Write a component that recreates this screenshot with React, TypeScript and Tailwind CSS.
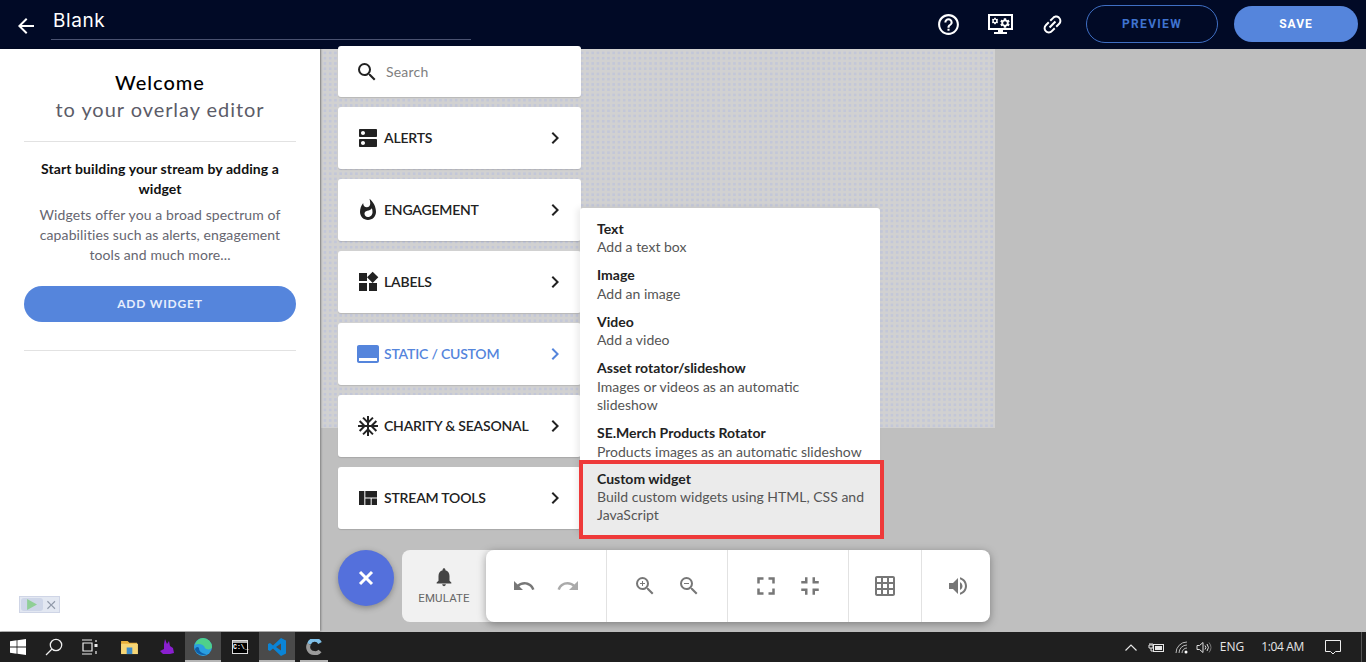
import * as React from "react"
import { X } from "lucide-react"
import {
  MdAcUnit,
  MdArrowBack,
  MdCallToAction,
  MdChevronRight,
  MdClose,
  MdDns,
  MdFullscreen,
  MdFullscreenExit,
  MdGridOn,
  MdHelpOutline,
  MdLink,
  MdNotifications,
  MdRedo,
  MdSearch,
  MdSettings,
  MdUndo,
  MdViewQuilt,
  MdVolumeUp,
  MdWhatshot,
  MdWidgets,
  MdZoomIn,
  MdZoomOut,
} from "react-icons/md"

const menu = [
  { label: "ALERTS", icon: <MdDns size={24} /> },
  { label: "ENGAGEMENT", icon: <MdWhatshot size={24} /> },
  { label: "LABELS", icon: <MdWidgets size={24} /> },
  { label: "STATIC / CUSTOM", icon: <MdCallToAction size={24} />, active: true },
  { label: "CHARITY & SEASONAL", icon: <MdAcUnit size={24} /> },
  { label: "STREAM TOOLS", icon: <MdViewQuilt size={24} /> },
]

const widgets = [
  { title: "Text", desc: "Add a text box" },
  { title: "Image", desc: "Add an image" },
  { title: "Video", desc: "Add a video" },
  { title: "Asset rotator/slideshow", desc: "Images or videos as an automatic slideshow" },
  { title: "SE.Merch Products Rotator", desc: "Products images as an automatic slideshow" },
]

function TopBar() {
  return (
    <header className="flex h-[49px] shrink-0 items-center bg-[#010a26] font-['Roboto',sans-serif] text-white">
      <MdArrowBack size={24} className="ml-[14px] mt-[2px]" />
      <div className="ml-[13px] mb-[3px] h-[34px] w-[420px] border-b border-[#4a5270] pl-[2px] font-['Inter',sans-serif] text-[19px] leading-[29px] tracking-[0.6px]">
        Blank
      </div>
      <div className="ml-auto mb-[1px] flex items-center">
        <MdHelpOutline size={25} />
        <div className="ml-[27px] flex flex-col items-center">
          <div className="flex h-[16px] w-[25px] items-center justify-center border-2 border-white">
            <MdSettings size={8} className="mb-[3px]" />
            <MdSettings size={12} className="mt-[1px]" />
          </div>
          <div className="h-[2px] w-[5px] bg-white" />
          <div className="h-[2px] w-[13px] bg-white" />
        </div>
        <MdLink size={25} className="ml-[27px] -rotate-45" />
        <button className="ml-[21px] h-[38px] w-[132px] rounded-full border border-[#3f6fc4] text-[12px] font-bold tracking-[1.3px] text-[#3f73cf]">
          PREVIEW
        </button>
        <button className="ml-[16px] mr-[8px] h-[36px] w-[124px] rounded-full bg-[#5585dc] text-[12px] font-bold tracking-[1px] text-white">
          SAVE
        </button>
      </div>
    </header>
  )
}

function WelcomePanel() {
  return (
    <aside className="relative z-10 flex w-[320px] shrink-0 flex-col bg-white px-[24px] text-center font-['Lato',sans-serif] shadow-[1px_0_2px_rgba(0,0,0,0.35)]">
      <h1 className="mt-[20px] text-[20px] font-medium leading-[27px] tracking-[1px] text-black">Welcome</h1>
      <p className="text-[20px] leading-[27px] tracking-[0.95px] text-[#5c5c68]">to your overlay editor</p>
      <div className="mt-[18px] h-px bg-[#e2e2e2]" />
      <p className="mt-[17px] text-[14px] font-bold leading-[20px] tracking-[0.1px] text-[#111]">
        Start building your stream by adding a widget
      </p>
      <p className="mt-[6px] px-[10px] text-[14px] leading-[20px] tracking-[0.1px] text-[#666670]">
        Widgets offer you a broad spectrum of capabilities such as alerts, engagement tools and much more...
      </p>
      <button className="mt-[21px] h-[36px] rounded-full bg-[#5585dc] text-[12px] font-bold tracking-[0.8px] text-[#e6eefc]">
        ADD WIDGET
      </button>
      <div className="mt-[28px] h-px bg-[#e2e2e2]" />
      <div className="absolute bottom-[18px] left-[19px] flex h-[17px] w-[41px] items-center gap-[1px] border border-[#cfd5e6] bg-[#e3e8f2] px-[1px]">
        <div className="flex h-[13px] w-[24px] items-center justify-center rounded-[3px] bg-[#ced6e8]">
          <svg width="11" height="11" viewBox="0 0 10 10">
            <path d="M1 0 L10 5 L1 10 Z" fill="#8fcf96" />
          </svg>
        </div>
        <MdClose size={16} className="text-[#8f98a8]" />
      </div>
    </aside>
  )
}

function WidgetMenu() {
  return (
    <div className="absolute left-[18px] top-[-3px] flex w-[243px] flex-col gap-[10px] font-['Lato',sans-serif]">
      <div className="flex h-[51px] items-center rounded-[3px] bg-white pl-[17px] shadow-[0_1px_1px_rgba(0,0,0,0.12)]">
        <MdSearch size={24} className="text-[#222]" />
        <span className="ml-[7px] text-[14px] tracking-[0.2px] text-[#808080]">Search</span>
      </div>
      {menu.map((item) => (
        <div
          key={item.label}
          className={`flex h-[62px] items-center rounded-[3px] bg-white pl-[18px] pr-[14px] shadow-[0_1px_1px_rgba(0,0,0,0.12)] ${
            item.active ? "text-[#5585dc]" : "text-[#222]"
          }`}
        >
          <div className="mr-[4px] flex w-[24px] shrink-0 justify-center">{item.icon}</div>
          <span className="mb-[2px] text-[14px] font-semibold tracking-[-0.2px]">{item.label}</span>
          <MdChevronRight size={24} className="ml-auto" />
        </div>
      ))}
    </div>
  )
}

function WidgetFlyout() {
  return (
    <div className="absolute left-[260px] top-[159px] w-[300px] rounded-[3px] bg-white pt-[7px] font-['Lato',sans-serif] text-[14px] leading-[18.5px] shadow-[-3px_0_6px_rgba(0,0,0,0.08)]">
      {widgets.map((w) => (
        <div key={w.title} className="px-[17px] py-[4.75px]">
          <div className="font-bold text-[#222]">{w.title}</div>
          <div className="text-[#555]">{w.desc}</div>
        </div>
      ))}
      <div className="relative mt-[-2px] bg-[#ebebeb] pb-[11px] pl-[17px] pr-[10px] pt-[6px] leading-[18px]">
        <div className="font-bold text-[#222]">Custom widget</div>
        <div className="text-[#555]">Build custom widgets using HTML, CSS and JavaScript</div>
        <div className="absolute -bottom-[4px] -left-[1px] -right-[4px] -top-[4px] border-4 border-[#ee3a3a]" />
      </div>
    </div>
  )
}

function ToolGroup({ children, className }: { children: React.ReactNode; className: string }) {
  return (
    <div className={`flex h-full items-center justify-center border-r border-[#e2e2e2] last:border-r-0 ${className}`}>
      {children}
    </div>
  )
}

function BottomToolbar() {
  return (
    <div className="absolute left-[18px] top-[501px] flex items-start font-['Roboto',sans-serif]">
      <button className="flex h-[56px] w-[56px] items-center justify-center rounded-full bg-[#5470dc] text-white shadow-[0_2px_6px_rgba(0,0,0,0.3)]">
        <X size={24} strokeWidth={3} strokeLinecap="butt" />
      </button>
      <div className="ml-[8px] flex h-[72px] w-[98px] flex-col items-center rounded-l-[8px] bg-[#f1f1f1] pr-[14px] pt-[16px] text-[11.5px] text-[#666]">
        <MdNotifications size={22} className="text-[#444]" />
        <span className="mt-[2px] tracking-[0.15px]">EMULATE</span>
      </div>
      <div className="ml-[-14px] flex h-[72px] w-[504px] rounded-[8px] bg-white text-[#777] shadow-[0_2px_8px_rgba(0,0,0,0.35)]">
        <ToolGroup className="w-[121px] gap-[20px]">
          <MdUndo size={24} />
          <MdRedo size={24} className="text-[#aaa]" />
        </ToolGroup>
        <ToolGroup className="w-[121px] gap-[20px]">
          <MdZoomIn size={24} />
          <MdZoomOut size={24} />
        </ToolGroup>
        <ToolGroup className="w-[121px] gap-[14px]">
          <MdFullscreen size={30} />
          <MdFullscreenExit size={30} />
        </ToolGroup>
        <ToolGroup className="w-[73px]">
          <MdGridOn size={24} />
        </ToolGroup>
        <ToolGroup className="flex-1 pl-[3px]">
          <MdVolumeUp size={24} />
        </ToolGroup>
      </div>
    </div>
  )
}

function TaskIcon({ children, active, width = "w-[37px]" }: { children: React.ReactNode; active?: boolean; width?: string }) {
  return (
    <div className={`relative flex h-full items-center justify-center ${width} ${active ? "bg-[#4a4a4a]" : ""}`}>
      {children}
      {active && <div className="absolute bottom-0 left-0 right-0 h-[2px] bg-[#b5b5b5]" />}
    </div>
  )
}

function Taskbar() {
  return (
    <footer className="flex h-[30px] shrink-0 items-center bg-[#1f1f1f] font-['Open_Sans',sans-serif] text-[12px] text-[#e6e6e6]">
      <TaskIcon width="w-[36px]">
        <svg width="16" height="16" viewBox="0 0 16 16" fill="#fff">
          <path d="M0 2.3 L6.6 1.3 V7.5 H0 Z M7.4 1.2 L16 0 V7.5 H7.4 Z M0 8.4 H6.6 V14.7 L0 13.7 Z M7.4 8.4 H16 V16 L7.4 14.8 Z" />
        </svg>
      </TaskIcon>
      <TaskIcon width="w-[36px]">
        <svg width="18" height="18" viewBox="0 0 18 18" fill="none" stroke="#eee" strokeWidth="1.3">
          <circle cx="11" cy="7" r="5.7" />
          <path d="M7 11 L1 17" />
        </svg>
      </TaskIcon>
      <TaskIcon width="w-[35px]">
        <svg width="16" height="16" viewBox="0 0 16 16" fill="none" stroke="#eee" strokeWidth="1.2">
          <path d="M0 1 H10 M0 15 H10 M1 4 H10 V12 H1 Z" />
          <path d="M14 1 V3 M14 12 V15" />
          <rect x="12.5" y="5" width="3" height="3" fill="#eee" stroke="none" />
        </svg>
      </TaskIcon>
      <div className="w-[4px]" />
      <TaskIcon>
        <svg width="17" height="15" viewBox="0 0 18 16">
          <path d="M0 1 H7 L9 3 H17 V14 H0 Z" fill="#e8b13c" />
          <rect x="0" y="4" width="18" height="11" fill="#f6d676" />
          <rect x="6" y="8" width="6" height="7" fill="#3d8ccb" />
        </svg>
      </TaskIcon>
      <TaskIcon>
        <svg width="14" height="16" viewBox="0 0 14 16">
          <path d="M5 0 L7 5 L9 2 L10 7 L13 9 L14 14 L10 15 H3 L0 12 L4 10 L4 5 Z" fill="#8a1fd0" />
        </svg>
      </TaskIcon>
      <TaskIcon active width="w-[36px]">
        <svg width="18" height="18" viewBox="0 0 18 18">
          <circle cx="9" cy="9" r="9" fill="#2a9fe0" />
          <path d="M9 0 A9 9 0 0 1 18 9 C18 12 12 12 11 10 C10 6 4 5 1 7 C2 3 5 0 9 0 Z" fill="#4fd08a" />
          <path d="M5 10 C5 14 9 16 13 16 A9 9 0 0 1 1 12 C1 9 4 8 5 10 Z" fill="#0f5ea8" />
        </svg>
      </TaskIcon>
      <TaskIcon width="w-[38px]">
        <div className="flex h-[14px] w-[16px] flex-col border border-[#ddd] bg-black">
          <div className="h-[2px] bg-[#aaa]" />
          <span className="font-['Liberation_Mono',monospace] text-[6.5px] font-bold leading-[9px] text-white">C:\_</span>
        </div>
      </TaskIcon>
      <TaskIcon active width="w-[36px]">
        <svg width="18" height="18" viewBox="0 0 18 18">
          <path d="M13 0 L18 2.5 V15.5 L13 18 L5 10.5 L2 13 L0 12 V6 L2 5 L5 7.5 Z M13 5.5 L8 9 L13 12.5 Z" fill="#0a84d6" fillRule="evenodd" />
        </svg>
      </TaskIcon>
      <div className="relative flex h-full w-[38px] items-center justify-center">
        <svg width="16" height="16" viewBox="0 0 16 16" fill="none" strokeWidth="4">
          <path d="M14 4 A6 6 0 0 0 3 5" stroke="#7fc0e8" />
          <path d="M3 5 A6 6 0 0 0 8 14 A6 6 0 0 0 14 12" stroke="#9a9a9a" />
        </svg>
        <div className="absolute bottom-0 left-[5px] right-[5px] h-[2px] bg-[#b5b5b5]" />
      </div>
      <div className="ml-auto flex h-full items-center">
        <svg width="12" height="7" viewBox="0 0 12 7" fill="none" stroke="#e6e6e6" strokeWidth="1.2" className="mr-[11px]">
          <path d="M0.5 6.5 L6 1 L11.5 6.5" />
        </svg>
        <svg width="16" height="11" viewBox="0 0 16 11" className="mr-[11px]">
          <path d="M2 3 V1 M4 3 V1 M1 3 H5 V6 H1 Z M3 6 V9 H5" stroke="#e6e6e6" fill="none" />
          <rect x="5.5" y="2.5" width="10" height="7" fill="none" stroke="#e6e6e6" />
          <rect x="7" y="4" width="7" height="4" fill="#e6e6e6" />
        </svg>
        <svg width="13" height="13" viewBox="0 0 13 13" fill="none" stroke="#bbb" className="mr-[8px]">
          <path d="M1 12 A11 11 0 0 1 12 1 M4 12 A8 8 0 0 1 12 4 M7 12 A5 5 0 0 1 12 7" />
          <circle cx="11" cy="11" r="1.5" fill="#fff" stroke="none" />
        </svg>
        <svg width="16" height="13" viewBox="0 0 16 13" fill="none" stroke="#ddd" className="mr-[8px]">
          <path d="M1 4.5 H3.5 L7 1.5 V11.5 L3.5 8.5 H1 Z" />
          <path d="M9 4.5 A3 3 0 0 1 9 8.5 M11 3 A5.5 5.5 0 0 1 11 10" />
          <path d="M13 1.5 A8 8 0 0 1 13 11.5" stroke="#777" />
        </svg>
        <span className="mr-[17px]">ENG</span>
        <span className="mr-[21px] tracking-[-0.35px]">1:04 AM</span>
        <svg width="16" height="15" viewBox="0 0 16 15" fill="none" stroke="#eee" className="mr-[20px]">
          <path d="M0.5 0.5 H15.5 V11.5 H10.5 L8 14 L5.5 11.5 H0.5 Z" />
        </svg>
        <div className="h-full w-px bg-[#555]" />
        <div className="w-[4px]" />
      </div>
    </footer>
  )
}

export default function App() {
  return (
    <div className="flex h-screen w-full flex-col overflow-hidden bg-[#bfbfbf]">
      <TopBar />
      <main className="flex min-h-0 flex-1">
        <WelcomePanel />
        <section className="relative flex-1">
          {/* dotted canvas: 2px squares left showing through 3px bars */}
          <div className="ml-[1px] h-[379px] w-[674px] bg-[#c3c7d8] bg-[linear-gradient(90deg,#d1d1d1_3px,transparent_3px),linear-gradient(#d1d1d1_3px,transparent_3px)] bg-[length:5.25px_5.25px]" />
          <WidgetMenu />
          <WidgetFlyout />
          <BottomToolbar />
        </section>
      </main>
      <div className="h-[1px] shrink-0 bg-[#bfbfbf]" />
      <Taskbar />
    </div>
  )
}
